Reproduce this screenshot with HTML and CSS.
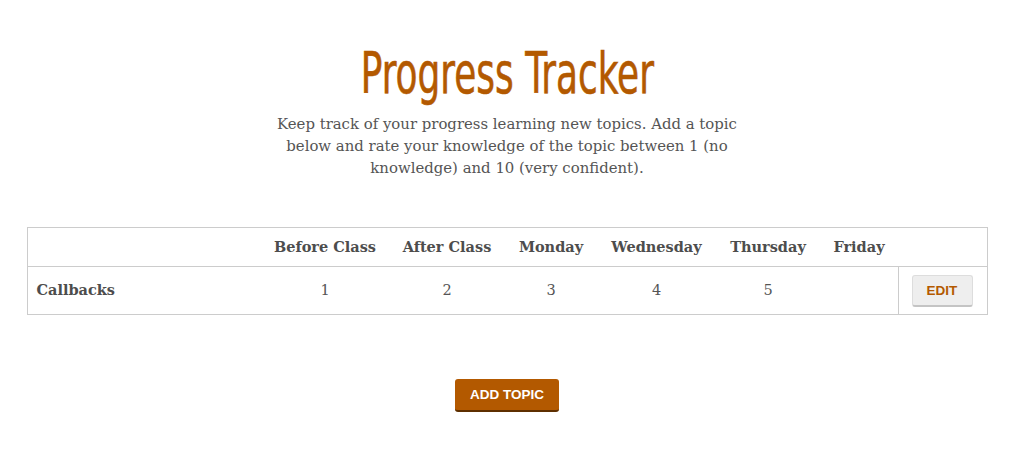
FILE: index.html
```html
<!DOCTYPE html>
<html lang="en">
<head>
<meta charset="utf-8">
<title>Progress Tracker</title>
<link rel="stylesheet" href="styles.css">
</head>
<body>
<main class="page">
  <header class="intro">
    <h1 class="title">Progress Tracker</h1>
    <p class="lead">Keep track of your progress learning new topics. Add a topic<br>below and rate your knowledge of the topic between 1 (no<br>knowledge) and 10 (very confident).</p>
  </header>
  <table class="tracker">
    <colgroup>
      <col class="c-topic">
      <col class="c-before">
      <col class="c-after">
      <col class="c-mon">
      <col class="c-wed">
      <col class="c-thu">
      <col class="c-fri">
      <col class="c-edit">
    </colgroup>
    <thead>
      <tr>
        <th></th>
        <th>Before Class</th>
        <th>After Class</th>
        <th>Monday</th>
        <th>Wednesday</th>
        <th>Thursday</th>
        <th>Friday</th>
        <th></th>
      </tr>
    </thead>
    <tbody>
      <tr>
        <td class="topic">Callbacks</td>
        <td>1</td>
        <td>2</td>
        <td>3</td>
        <td>4</td>
        <td>5</td>
        <td></td>
        <td class="edit-cell"><button class="btn-edit">EDIT</button></td>
      </tr>
    </tbody>
  </table>
  <div class="actions">
    <button class="btn-add">ADD TOPIC</button>
  </div>
</main>
</body>
</html>
```
FILE: styles.css
```css
* { box-sizing: border-box; }
html, body { margin: 0; padding: 0; background: #fff; }
body {
  font-family: "DejaVu Serif", "Liberation Serif", serif;
  color: #555;
}
.page {
  padding: 0 27px;
  display: flex;
  flex-direction: column;
  align-items: center;
}
.intro {
  display: flex;
  flex-direction: column;
  align-items: center;
  padding-top: 38px;
}
.title {
  margin: 0;
  font-family: "DejaVu Sans Condensed", "DejaVu Sans", sans-serif;
  font-weight: normal;
  font-size: 57px;
  line-height: 70px;
  color: #b35900;
  white-space: nowrap;
  transform: scaleX(0.70);
  -webkit-text-stroke: 0.6px #b35900;
}
.lead {
  margin: 5px 0 0;
  font-size: 14.9px;
  line-height: 22px;
  text-align: center;
}
.tracker {
  margin-top: 48px;
  width: 960px;
  table-layout: fixed;
  border-collapse: collapse;
  border: 1px solid #ccc;
  font-size: 14.5px;
}
.c-topic { width: 234px; }
.c-before { width: 128px; }
.c-after { width: 116px; }
.c-mon { width: 92px; }
.c-wed { width: 119px; }
.c-thu { width: 104px; }
.c-fri { width: 78px; }
.c-edit { width: 89px; }
.tracker th {
  height: 39px;
  font-weight: bold;
  text-align: center;
  padding: 0 4px 2px;
  border-bottom: 1px solid #ccc;
  white-space: nowrap;
  color: #4d4d4d;
}
.tracker td {
  height: 48px;
  text-align: center;
  padding: 0 4px 2px;
}
.tracker td.topic {
  text-align: left;
  font-weight: bold;
  padding-left: 9px;
  color: #4d4d4d;
}
.tracker td.edit-cell {
  border-left: 1px solid #ccc;
  text-align: left;
  padding: 0 0 0 13px;
}
.btn-edit {
  width: 61px;
  height: 32px;
  border: 1px solid #ddd;
  border-bottom: 2px solid #c4c4c4;
  border-radius: 3px;
  background: #eee;
  color: #b35900;
  font-family: "Liberation Sans", Arial, sans-serif;
  font-weight: bold;
  font-size: 13.5px;
  cursor: pointer;
}
.actions {
  margin-top: 64px;
  display: flex;
  justify-content: center;
}
.btn-add {
  width: 104px;
  height: 33px;
  border: 0;
  border-bottom: 2px solid #5e2f00;
  border-radius: 3px;
  background: #b35900;
  color: #fff;
  font-family: "Liberation Sans", Arial, sans-serif;
  font-weight: bold;
  font-size: 13.5px;
  cursor: pointer;
}
```
